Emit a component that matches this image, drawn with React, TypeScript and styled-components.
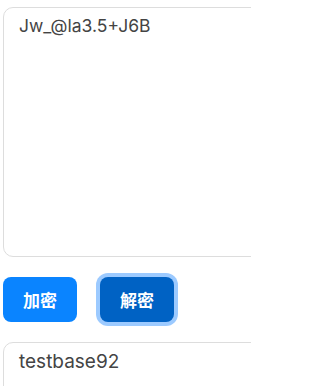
import React, { useState } from 'react';
import styled, { createGlobalStyle } from 'styled-components';

const GlobalStyle = createGlobalStyle`
  html, body {
    margin: 0;
    overflow: hidden;
  }
  body {
    font-family: Inter, "Noto Sans CJK SC", sans-serif;
    background: #ffffff;
  }
`;

const Page = styled('div')`
  box-sizing: border-box;
  width: 251px;
  height: 386px;
  overflow: hidden;
  padding: 7px 0 0 3px;
  display: flex;
  flex-direction: column;
  gap: 20px;
`;

const TextBox = styled('textarea')<{ $rows: number; $size: number }>`
  box-sizing: border-box;
  flex: none;
  width: 300px;
  height: ${(p) => p.$rows}px;
  padding: 7px 15px;
  border: 1px solid #dddddd;
  border-radius: 10px;
  font-family: Inter, "Noto Sans CJK SC", sans-serif;
  font-size: ${(p) => p.$size}px;
  color: #444444;
  resize: none;
  outline: none;
  display: block;
`;

const Toolbar = styled('div')`
  display: flex;
  gap: 23px;
`;

const Button = styled('button')<{ $active?: boolean }>`
  width: 74px;
  height: 45px;
  padding: 0;
  border: none;
  border-radius: 8px;
  color: #ffffff;
  font-family: "Noto Sans CJK SC", sans-serif;
  font-weight: 700;
  font-size: 17px;
  cursor: pointer;
  background: ${(p) => (p.$active ? '#0062c4' : '#0a84ff')};
  box-shadow: ${(p) => (p.$active ? '0 0 0 4px #9ccaff' : 'none')};
`;

export default function App() {
  const [mode, setMode] = useState<'enc' | 'dec'>('dec');

  return (
    <Page>
      <GlobalStyle />
      <TextBox $rows={250} $size={17.5} defaultValue='Jw_@la3.5+J6B' />
      <Toolbar>
        <Button $active={mode === 'enc'} onClick={() => setMode('enc')}>加密</Button>
        <Button $active={mode === 'dec'} onClick={() => setMode('dec')}>解密</Button>
      </Toolbar>
      <TextBox $rows={120} $size={19} defaultValue='testbase92' />
    </Page>
  );
}
